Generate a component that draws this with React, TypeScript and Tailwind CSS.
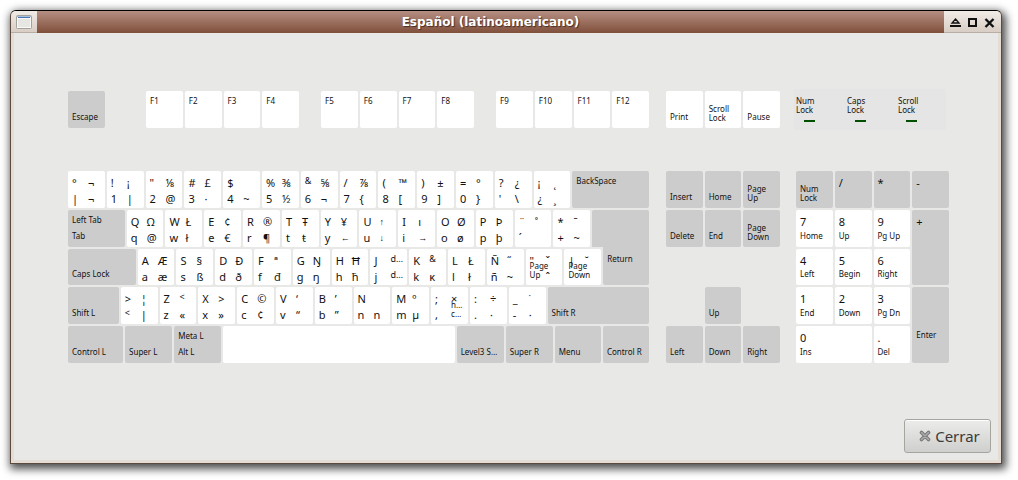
import React from 'react';

type Tone = 'light' | 'dark';
interface KeyDef {
  w?: number;
  tone?: Tone;
  // Legends in the order: top-left, top-right, bottom-left, bottom-right.
  glyphs?: string[];
  // Positions in `glyphs` that are drawn in the small size.
  small?: number[];
  top?: string;
  bottom?: string;
  // Bottom label that belongs to the right-hand column.
  bottomRight?: string;
  shape?: string;
}

const g = (glyphs: string, w = 37, small: number[] = []): KeyDef => ({ w, glyphs: glyphs.split(' ').map((c) => (c === '_0' ? '' : c)), small });
const dark = (bottom: string, w = 37, top?: string): KeyDef => ({ w, tone: 'dark', bottom, top });

const cellClass = [
  'col-start-1 row-start-1',
  'col-start-2 row-start-1',
  'col-start-1 row-start-2',
  'col-start-2 row-start-2',
];

function glyphSize(char: string, small: boolean) {
  if (small) return 'text-[9px] leading-3';
  if ('←↑→↓'.includes(char)) return "font-['Liberation_Sans',sans-serif] text-[9px]";
  return '';
}

function Key({ def, className = '' }: { def: KeyDef; className?: string }) {
  const tone = def.tone === 'dark' ? 'bg-[#cccccc]' : 'bg-white';
  return (
    <div
      className={`grid min-w-0 grid-cols-1 grid-rows-1 rounded-[2px] ${tone} ${def.shape ?? ''} ${className}`}
      style={def.w ? { flexGrow: def.w, flexBasis: 0 } : undefined}
    >
      {def.glyphs && (
        <div className="col-start-1 row-start-1 ml-1 grid grid-cols-[16px_16px] grid-rows-[16px_16px] pt-1 text-[11px] leading-4">
          {def.glyphs.map((c, i) =>
            c ? (
              <span key={i} className={`${cellClass[i]} whitespace-nowrap ${glyphSize(c, !!def.small?.includes(i))}`}>
                {c}
              </span>
            ) : null,
          )}
        </div>
      )}
      {def.top && <span className="col-start-1 row-start-1 ml-1 pt-[5px] text-[8px] leading-[9px]">{def.top}</span>}
      {def.bottom && (
        <span
          className={`col-start-1 row-start-1 ml-1 self-end text-[8px] leading-[9px] whitespace-pre ${def.bottom.includes('\n') ? 'pb-[6px]' : 'pb-[7px]'}`}
        >
          {def.bottom}
        </span>
      )}
      {def.bottomRight && (
        <span className="col-start-1 row-start-1 ml-5 self-end pb-[6px] text-[8px] leading-[9px] whitespace-pre">{def.bottomRight}</span>
      )}
    </div>
  );
}

const rows: KeyDef[][] = [
  [
    g('° ¬ | ¬'), g('! ¡ 1 |'), g('" ⅛ 2 @'), g('# £ 3 ·'), g('$ _0 4 ~'), g('% ⅜ 5 ½'), g('& ⅝ 6 ¬', 37, [0]),
    g('/ ⅞ 7 {'), g('( ™ 8 ['), g(') ± 9 ]'), g('= ° 0 }'), g("? ¿ ' \\"), g('¡ ˛ ¿ ¸'),
    { w: 77, tone: 'dark', top: 'BackSpace' },
  ],
  [
    dark('Tab', 57, 'Left Tab'), g('Q Ω q @'), g('W Ł w ł'), g('E ¢ e €'), g('R ® r ¶'), g('T Ŧ t ŧ'), g('Y ¥ y ←'),
    g('U ↑ u ↓'), g('I ı i →'), g('O Ø o ø'), g('P Þ p þ'), g('¨ ˚ ´ _0'), g('* ˉ + ~'),
    { w: 57, tone: 'dark', shape: 'rounded-b-none' },
  ],
  [
    dark('Caps Lock', 68), g('A Æ a æ'), g('S § s ß'), g('D Ð d ð'), g('F ª f đ'), g('G Ŋ g ŋ'), g('H Ħ h ħ'),
    g('J d… j d…', 37, [1, 3]), g('K & k ĸ', 37, [1]), g('L Ł l ł'), g('Ñ ˝ ñ ~'),
    { ...g('" ˇ _0 ˆ'), bottom: 'Page\nUp' }, { ...g('| ˘ _0 _0'), bottom: 'Page\nDown' },
    { w: 46, tone: 'dark', top: 'Return', shape: '-mt-0.5 rounded-t-none pt-0.5' },
  ],
  [
    dark('Shift L', 51), g('> ¦ < |', 37, [2]), g('Z < z «', 37, [1]), g('X > x »'), g('C © c ¢'), g('V ‘ v “'), g('B ’ b ”'),
    g('N _0 n n'), g('M º m µ'), { ...g('; × , _0'), bottomRight: 'h…\nc…' }, g(': ÷ . ·'), g('_ ˙ - ·'), dark('Shift R', 102),
  ],
  [
    dark('Control L', 55), dark('Super L', 47), dark('Alt L', 47, 'Meta L'), { w: 231 }, dark('Level3 S…', 47),
    dark('Super R', 47), dark('Menu', 46), dark('Control R', 46),
  ],
];

const functionGroups = [['F1', 'F2', 'F3', 'F4'], ['F5', 'F6', 'F7', 'F8'], ['F9', 'F10', 'F11', 'F12']];

const pad = (digit: string, name: string): KeyDef => ({ glyphs: [digit], bottom: name });

function WindowIcon() {
  return (
    <svg width="16" height="14" viewBox="0 0 16 14" aria-hidden="true">
      <rect x="0.5" y="0.5" width="15" height="13" rx="1" fill="#e6e7e3" stroke="#a3a19c" />
      <rect x="1.5" y="3.5" width="13" height="9" fill="none" stroke="#f8f8f6" />
      <rect x="1" y="1" width="14" height="1" fill="#a9bedb" />
      <rect x="2" y="2" width="12" height="1" fill="#4a76b4" />
    </svg>
  );
}

export default function App() {
  return (
    <main className="min-h-screen bg-white pt-[10px] pr-4 pb-4 pl-[10px] font-['Noto_Sans','Open_Sans','DejaVu_Sans',sans-serif] text-[#111]">
      <section className="flex min-h-[454px] flex-col overflow-hidden rounded-t-md border border-[#5b483e] border-t-black bg-[#e8e8e6] shadow-[2px_3px_9px_2px_rgba(0,0,0,0.7)]">
        <header className="flex h-[22px] bg-linear-to-b from-[#b58f83] to-[#80503b]">
          <div className="flex w-[26px] items-center justify-center border-b border-[#b9aea5] bg-linear-to-b from-[#f1ebe6] to-[#d9cec5]">
            <WindowIcon />
          </div>
          <h1 className="flex-1 pt-px text-center font-['DejaVu_Sans',sans-serif] text-[12px] leading-[21px] font-bold text-white [text-shadow:1px_1px_1px_#4a2c20]">
            Español (latinoamericano)
          </h1>
          <div className="flex w-[57px] items-center justify-center gap-[6px] border-b border-[#b9aea5] bg-linear-to-b from-[#f1ebe6] to-[#d9cec5] pt-0.5">
            <button aria-label="Enrollar">
              <svg width="11" height="10" viewBox="0 0 11 10"><path d="M5.5 1 9 5H2Z" fill="none" stroke="#111" strokeWidth="1.3" /><path d="M0 7h11v2H0z" fill="#111" /></svg>
            </button>
            <button aria-label="Maximizar">
              <svg width="11" height="10" viewBox="0 0 11 10"><path d="M2 1h7v7H2z" fill="none" stroke="#111" strokeWidth="2" /></svg>
            </button>
            <button aria-label="Cerrar ventana">
              <svg width="11" height="10" viewBox="0 0 11 10"><path d="m1.5 1 8 8m0-8-8 8" stroke="#111" strokeWidth="2.4" /></svg>
            </button>
          </div>
        </header>

        <div className="flex flex-1 flex-col border-x-[3px] border-b-[3px] border-[#e5dcd3] pr-[7px] pb-[7px] pl-[54px]">
          <div className="mr-[42px] grid grid-cols-[582fr_114fr_153fr] gap-x-4 gap-y-[43px] pt-[58px]">
            <div className="flex h-[37px] gap-[22px] pr-px">
              <div className="flex basis-0 grow-[56]">
                <div className="grid grow pr-[19px]"><Key def={{ tone: 'dark', bottom: 'Escape' }} /></div>
              </div>
              {functionGroups.map((group) => (
                <div key={group[0]} className="flex basis-0 grow-[153] gap-0.5">
                  {group.map((name) => <Key key={name} def={{ w: 37, top: name }} />)}
                </div>
              ))}
            </div>
            <div className="flex h-[37px] gap-0.5">
              {['Print', 'Scroll\nLock', 'Pause'].map((name) => <Key key={name} def={{ w: 37, bottom: name }} />)}
            </div>
            <div className="-my-0.5 mr-[3px] -ml-0.5 grid h-[41px] grid-cols-[51fr_51fr_48fr] bg-[#e5e5e5] pt-[7px] pl-0.5">
              {['Num\nLock', 'Caps\nLock', 'Scroll\nLock'].map((name) => (
                <div key={name} className="text-[8px] leading-[9px] whitespace-pre">
                  {name}
                  <div className="mt-[6px] ml-2 h-0.5 w-[11px] bg-[#005000]" />
                </div>
              ))}
            </div>

            <div className="grid h-48 grid-rows-5 gap-0.5 pr-px">
              {rows.map((row, r) => (
                <div key={r} className="flex gap-0.5">
                  {row.map((def, i) => <Key key={i} def={def} />)}
                </div>
              ))}
            </div>
            <div className="grid h-48 grid-cols-3 grid-rows-5 gap-0.5">
              {['Insert', 'Home', 'Page\nUp', 'Delete', 'End', 'Page\nDown'].map((n) => <Key key={n} def={{ tone: 'dark', bottom: n }} />)}
              <Key def={{ tone: 'dark', bottom: 'Up' }} className="col-start-2 row-start-4" />
              {['Left', 'Down', 'Right'].map((n) => <Key key={n} def={{ tone: 'dark', bottom: n }} className="row-start-5" />)}
            </div>
            <div className="grid h-48 grid-cols-4 grid-rows-5 gap-0.5">
              <Key def={{ tone: 'dark', bottom: 'Num\nLock' }} />
              {['/', '*', '-'].map((c) => <Key key={c} def={{ tone: 'dark', glyphs: [c] }} />)}
              <Key def={pad('7', 'Home')} />
              <Key def={pad('8', 'Up')} />
              <Key def={pad('9', 'Pg Up')} />
              <Key def={{ tone: 'dark', glyphs: ['+'] }} className="row-span-2" />
              <Key def={pad('4', 'Left')} />
              <Key def={pad('5', 'Begin')} />
              <Key def={pad('6', 'Right')} />
              <Key def={pad('1', 'End')} />
              <Key def={pad('2', 'Down')} />
              <Key def={pad('3', 'Pg Dn')} />
              <Key def={{ tone: 'dark', bottom: 'Enter' }} className="row-span-2 pb-[17px]" />
              <Key def={pad('0', 'Ins')} className="col-span-2" />
              <Key def={pad('.', 'Del')} />
            </div>
          </div>
          <div className="mt-auto flex justify-end">
            <button className="flex h-[34px] w-[87px] items-center justify-center gap-1 rounded-[3px] border border-[#a5a5a0] bg-linear-to-b from-[#ececeb] to-[#cfcfcd] pl-1 text-[15px] text-[#3a3a3a] shadow-[inset_0_1px_0_#fff]">
              <svg width="12" height="12" viewBox="0 0 12 12" aria-hidden="true">
                <path d="m2.5 2.5 7 7m0-7-7 7" stroke="#777" strokeWidth="3.6" strokeLinecap="round" />
                <path d="m2.5 2.5 7 7m0-7-7 7" stroke="#aaa" strokeWidth="1.6" strokeLinecap="round" />
              </svg>
              Cerrar
            </button>
          </div>
        </div>
      </section>
    </main>
  );
}
